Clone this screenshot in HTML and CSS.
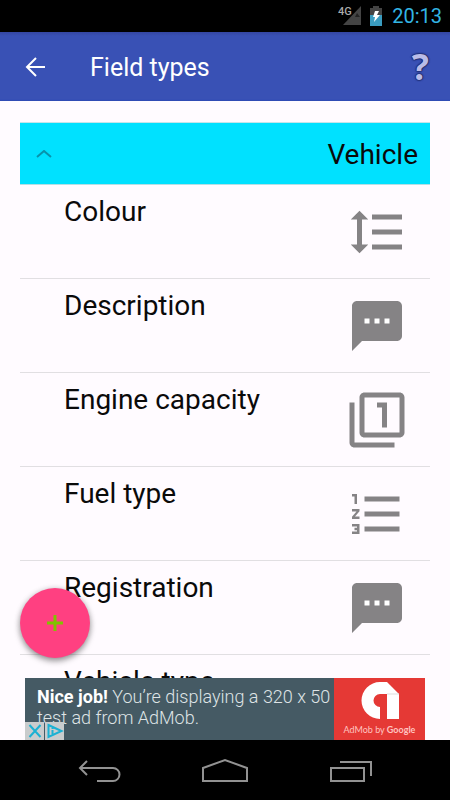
FILE: index.html
```html
<!DOCTYPE html>
<html lang="en">
<head>
<meta charset="utf-8">
<meta name="viewport" content="width=device-width, initial-scale=1">
<title>Field types</title>
<link rel="stylesheet" href="styles.css">
</head>
<body>
<div class="status">
  <svg class="signal" viewBox="0 0 24 24" role="img" aria-label="Mobile signal">
    <path fill="#444" d="M23 2v19H5z"/>
    <path fill="#222" d="M19 9l3 4h-5z"/>
    <text x="0" y="11" class="signal-text">4G</text>
  </svg>
  <svg class="battery" viewBox="0 0 14 20" role="img" aria-label="Battery charging">
    <path fill="#444" d="M4 0h6v2h3v8H1V2h3z"/>
    <path fill="#3a9cc0" d="M1 9h12v11H1z"/>
    <path fill="#fff" d="M6 5h4l-2 4h3l-6 7 1-5H4z"/>
  </svg>
  <time class="clock">20:13</time>
</div>
<header class="appbar">
  <button class="icon-button" aria-label="Back">
    <svg class="back" viewBox="0 0 22 20"><path d="M12 1L3 10l9 9M3 10h18"/></svg>
  </button>
  <h1 class="title">Field types</h1>
  <button class="help" aria-label="Help">?</button>
</header>
<main class="content">
  <section class="list">
    <button class="group" aria-expanded="true">
      <svg class="chevron" viewBox="0 0 16 10"><path d="M1 7l7-6 7 6"/></svg>
      <span>Vehicle</span>
    </button>
    <ul class="rows">
      <li class="row"><span>Colour</span>
        <svg class="type" viewBox="0 0 24 24"><path d="M6 7h2.500L5 3.500 1.500 7H4v10H1.500L5 20.500 8.500 17H6zM10 5v2h12V5zM10 19h12v-2H10zM10 13h12v-2H10z"/></svg></li>
      <li class="row"><span>Description</span>
        <svg class="type" viewBox="0 0 24 24"><path fill="#fff" d="M6 8h12v4H6z"/><path d="M20 2H4c-1.100 0-2 .9-2 2v18l4-4h14c1.100 0 2-.9 2-2V4c0-1.100-.9-2-2-2zM9 11H7V9h2zM13 11h-2V9h2zM17 11h-2V9h2z"/></svg></li>
      <li class="row"><span>Engine capacity</span>
        <svg class="type" viewBox="0 0 24 24"><path d="M3 5H1v16c0 1.100.9 2 2 2h16v-2H3zM14 15h2V5h-4v2h2zM21 1H7c-1.100 0-2 .9-2 2v14c0 1.100.9 2 2 2h14c1.100 0 2-.9 2-2V3c0-1.100-.9-2-2-2zM21 17H7V3h14z"/></svg></li>
      <li class="row"><span>Fuel type</span>
        <svg class="type" viewBox="0 0 24 24"><path d="M2 17h2v.5H3v1h1v.5H2v1h3v-4H2zM3 8h1V4H2v1h1zM2 11h1.800L2 13.100v.9h3v-1H3.200L5 10.900V10H2zM7 5v2h14V5zM7 19h14v-2H7zM7 13h14v-2H7z"/></svg></li>
      <li class="row"><span>Registration</span>
        <svg class="type" viewBox="0 0 24 24"><path fill="#fff" d="M6 8h12v4H6z"/><path d="M20 2H4c-1.100 0-2 .9-2 2v18l4-4h14c1.100 0 2-.9 2-2V4c0-1.100-.9-2-2-2zM9 11H7V9h2zM13 11h-2V9h2zM17 11h-2V9h2z"/></svg></li>
      <li class="row"><span>Vehicle type</span></li>
    </ul>
  </section>
  <button class="fab" aria-label="Add field type">
    <svg viewBox="0 0 18 18"><path d="M7.500 1h3v6.500H17v3h-6.500V17h-3v-6.500H1v-3h6.500z"/></svg>
  </button>
  <aside class="ad">
    <p class="ad-text"><b>Nice job!</b> You’re displaying a 320 x 50 test ad from AdMob.</p>
    <div class="ad-brand">
      <svg viewBox="0 0 38 38"><path fill="#fff" d="M19 0h7l12 12v25H26V12h-7a6.500 6.500 0 0 0 0 13v12A18.500 18.500 0 0 1 19 0z"/><path fill="none" stroke="#ddd" d="M38 12H26"/></svg>
      <span>AdMob by <b>Google</b></span>
    </div>
    <div class="ad-controls">
      <button aria-label="Close ad"><svg viewBox="0 0 18 18"><path d="M4 3l11 12M15 3L4 15"/></svg></button>
      <button aria-label="About this ad"><svg viewBox="0 0 18 18"><path d="M3 3l13 6-13 6zM7 8v4M7 6v1"/></svg></button>
    </div>
  </aside>
</main>
<nav class="navbar">
  <button aria-label="Back"><svg viewBox="0 0 48 28"><path d="M12 5L5 12l7 7M5 12h33a6.500 6.500 0 0 1 0 13H22"/></svg></button>
  <button aria-label="Home"><svg viewBox="0 0 48 28"><path d="M2 25V12L24 4l22 8v13z"/></svg></button>
  <button aria-label="Recent apps"><svg viewBox="0 0 48 28"><path d="M4 12h33v13H4zM13 6h31v14"/></svg></button>
</nav>
</body>
</html>
```

FILE: styles.css
```css
* { box-sizing: border-box; }

body {
  margin: 0;
  height: 100vh;
  display: flex;
  flex-direction: column;
  background: #fffbff;
  color: #0a0a0a;
  font-family: Roboto, "Noto Sans", sans-serif;
  overflow: hidden;
}

button {
  margin: 0;
  padding: 0;
  border: 0;
  background: none;
  color: inherit;
  font: inherit;
}

svg { display: block; }

.status {
  flex: none;
  height: 32px;
  padding-right: 8px;
  display: flex;
  align-items: center;
  justify-content: flex-end;
  background: #000;
}

.signal { width: 24px; height: 24px; margin-right: 7px; }
.signal-text { fill: #aaa; font-size: 11px; font-weight: 500; }
.battery { width: 14px; height: 20px; margin-right: 9px; }
.clock { color: #33b5e5; font-size: 20px; line-height: 32px; }

.appbar {
  flex: none;
  height: 69px;
  padding: 0 21px 0 24px;
  display: flex;
  align-items: center;
  background: linear-gradient(#3446a2, #3951b5 4px, #3951b5 67px, #2c49b4);
  color: #fff;
}

.back { width: 22px; height: 20px; fill: none; stroke: #fff; stroke-width: 2; }

.title {
  flex: 1;
  margin: 0 0 0 44px;
  padding-top: 2px;
  font-size: 25px;
  font-weight: 400;
}

.help {
  color: #b9bce8;
  font-family: "Open Sans", sans-serif;
  font-size: 36px;
  font-weight: 700;
  line-height: 48px;
  text-shadow: 0 0 1px #10184c, 0 0 2px #10184c, 0 0 2px #10184c;
}

.content {
  flex: 1;
  min-height: 0;
  position: relative;
  overflow: hidden;
}

.list { margin: 21px 20px 0; }

.group {
  width: 100%;
  height: 63px;
  padding: 2px 12px 0 16px;
  display: flex;
  align-items: center;
  justify-content: space-between;
  border-top: 1px solid #c5e5ea;
  border-bottom: 1px solid #b5dfe5;
  background: #00e1ff;
  font-size: 28px;
}

.chevron { width: 16px; height: 10px; fill: none; stroke: #0892ab; stroke-width: 2; }

.rows { margin: 0; padding: 0; list-style: none; }

.row {
  height: 94px;
  padding: 10px 23px 0 44px;
  display: flex;
  align-items: flex-start;
  justify-content: space-between;
  border-bottom: 1px solid #e1dfe2;
  font-size: 28px;
  line-height: 34px;
}

.type { width: 60px; height: 60px; margin-top: 7px; fill: #858385; }

.fab {
  position: absolute;
  left: 20px;
  bottom: 82px;
  width: 70px;
  height: 70px;
  display: grid;
  place-items: center;
  border-radius: 50%;
  background: #ff4081;
  box-shadow: 0 3px 6px rgba(0, 0, 0, 0.4), 0 0 6px rgba(0, 0, 0, 0.1);
}

.fab svg { width: 18px; height: 18px; fill: #7fc400; }

.ad {
  position: absolute;
  left: 25px;
  right: 25px;
  bottom: 0;
  height: 62px;
  display: flex;
  background: #455a64;
  color: #dfe4e6;
}

.ad-text {
  flex: 1;
  margin: 0;
  padding: 8px 0 0 12px;
  font-size: 18px;
  font-weight: 300;
  line-height: 21px;
}

.ad-text b { color: #fff; font-weight: 700; }

.ad-brand {
  flex: none;
  width: 91px;
  padding-top: 4px;
  display: flex;
  flex-direction: column;
  align-items: center;
  gap: 3px;
  background: #e53935;
  color: #ffc4c0;
  font-family: Lato, sans-serif;
  font-size: 9px;
  line-height: 14px;
}

.ad-brand svg { width: 38px; height: 38px; }
.ad-brand b { font-weight: 700; }

.ad-controls {
  position: absolute;
  left: 0;
  bottom: 0;
  display: flex;
  gap: 1px;
}

.ad-controls button { width: 19px; height: 18px; background: #c9cccd; }
.ad-controls svg { width: 19px; height: 18px; fill: none; stroke: #1bb1d3; stroke-width: 2; }

.navbar {
  flex: none;
  height: 60px;
  padding: 0 36px;
  display: flex;
  align-items: center;
  background: #000;
}

.navbar button { flex: 1; display: grid; place-items: center; }
.navbar svg { width: 48px; height: 28px; fill: none; stroke: #929292; stroke-width: 2; }
```
